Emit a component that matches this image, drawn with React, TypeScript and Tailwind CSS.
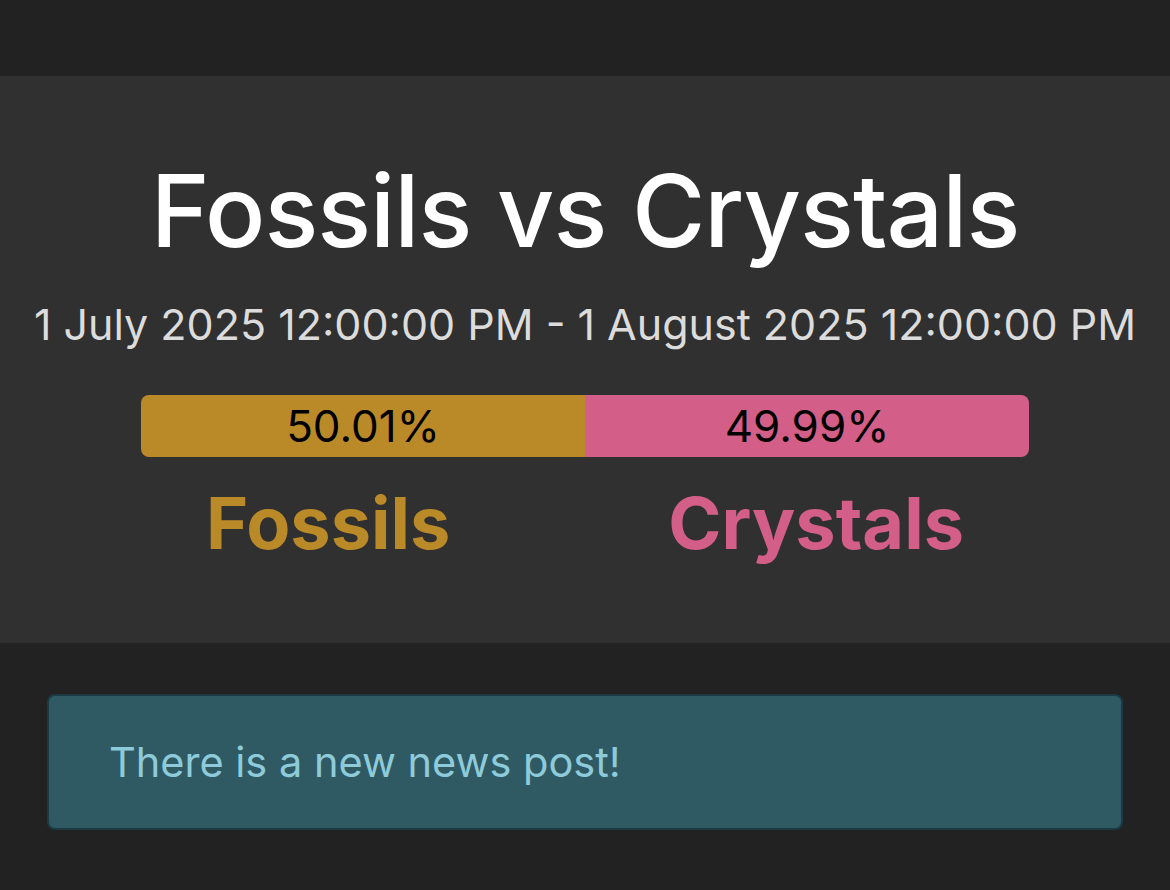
export default function App() {
  const left = 50.01;
  const right = 49.99;
  return (
    <div className="min-h-[890px] bg-[#222222] font-['Inter',sans-serif]">
      <div className="h-[76px]" />
      <section className="bg-[#303030] flex flex-col items-center pt-[85px] pb-[84px]">
        <h1 className="text-[100px] leading-[1] font-medium text-white tracking-[-0.01em]">
          Fossils vs Crystals
        </h1>
        <p className="mt-[42px] text-[43px] leading-none text-[#dcdcdc]">
          1 July 2025 12:00:00 PM - 1 August 2025 12:00:00 PM
        </p>
        <div className="mt-[49px] w-[888px] h-[62px] flex rounded-lg overflow-hidden text-[44px] text-black">
          <div className="bg-[#bb8a28] flex items-center justify-center" style={{ width: `${left}%` }}>
            {left}%
          </div>
          <div className="bg-[#d35f88] flex items-center justify-center" style={{ width: `${right}%` }}>
            {right}%
          </div>
        </div>
        <div className="w-[888px] flex justify-between px-[65px] mt-[30px] text-[72px] leading-none font-bold">
          <span className="text-[#bb8a28]">Fossils</span>
          <span className="text-[#d35f88]">Crystals</span>
        </div>
      </section>
      <div className="px-[47px] pt-[51px]">
        <div className="h-[136px] flex items-center px-[60px] rounded-lg bg-[#305a63] border-2 border-[#1b3a44] text-[#8dcbdb] text-[41.5px]">
          There is a new news post!
        </div>
      </div>
    </div>
  );
}
